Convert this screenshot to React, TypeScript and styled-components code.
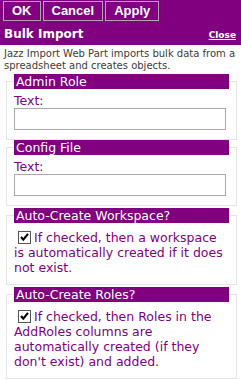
import React from "react";
import styled, { createGlobalStyle } from "styled-components";

const PURPLE = "#800080";

const Global = createGlobalStyle`
  html, body { margin: 0; padding: 0; background: #fff; }
  body { width: 241px; font-family: "DejaVu Sans", Verdana, sans-serif; }
`;

const Panel = styled.div`
  width: 241px;
  display: flex;
  flex-direction: column;
`;

const Top = styled.div`
  background: ${PURPLE};
  display: flex;
  flex-direction: column;
`;

const Toolbar = styled.div`
  display: flex;
  gap: 2px;
  padding: 1px 0 0 3px;
  height: 20px;
`;

const Button = styled.button`
  height: 20px;
  margin: 0;
  padding: 0 8px;
  border: 1px solid #a8a8a8;
  background: ${PURPLE};
  color: #fff;
  font-family: "Liberation Sans", Arial, sans-serif;
  font-weight: bold;
  font-size: 13px;
  line-height: 18px;
  cursor: pointer;
`;

const TitleRow = styled.div`
  height: 24px;
  display: flex;
  align-items: flex-end;
  justify-content: space-between;
  padding: 0 5px 4px 4px;
  box-sizing: border-box;
`;

const Title = styled.span`
  color: #fff;
  font-weight: bold;
  font-size: 12px;
  line-height: 14px;
`;

const Close = styled.a`
  color: #fff;
  font-weight: bold;
  font-size: 9px;
  line-height: 12px;
  text-decoration: underline;
  cursor: pointer;
`;

const Description = styled.div`
  color: #3c3c3c;
  font-size: 10px;
  line-height: 12px;
  padding: 3px 4px 0 4px;
`;

const Group = styled.fieldset<{ $gap: number }>`
  margin: ${(p) => p.$gap}px 0 0 6px;
  width: 231px;
  box-sizing: border-box;
  min-width: 0;
  border: 1px solid #e4e4e4;
  padding: 0 7px 9px 7px;
`;

const Legend = styled.legend`
  display: block;
  width: 100%;
  box-sizing: border-box;
  padding: 0 2px;
  margin: 0;
  height: 15px;
  background: ${PURPLE};
  color: #fff;
  font-size: 12.5px;
  line-height: 15px;
  white-space: nowrap;
`;

const Label = styled.label`
  display: block;
  margin-top: 4px;
  color: ${PURPLE};
  font-size: 12.5px;
  line-height: 15px;
`;

const TextInput = styled.input`
  display: block;
  width: 212px;
  height: 22px;
  margin: 0;
  box-sizing: border-box;
  border: 1px solid #a9a9a9;
  background: #fff;
  padding: 1px 3px;
  font-family: "DejaVu Sans", sans-serif;
  font-size: 12px;
`;

const CheckText = styled.label`
  display: block;
  margin-top: 7px;
  color: ${PURPLE};
  font-size: 12.5px;
  line-height: 15px;
`;

const Box = styled.span`
  display: inline-block;
  width: 13px;
  height: 13px;
  box-sizing: border-box;
  border: 1px solid #555;
  background: #fff;
  margin: 0 3px 0 4px;
  vertical-align: -2px;
  position: relative;
  svg {
    position: absolute;
    left: 0;
    top: 0;
  }
`;

const Check = () => (
  <Box>
    <svg width="11" height="11" viewBox="0 0 11 11">
      <path d="M2 5 L4.3 7.6 L9 1.8" fill="none" stroke="#000" strokeWidth="2.1" />
    </svg>
  </Box>
);

const TextGroup = ({ title, gap }: { title: string; gap: number }) => (
  <Group $gap={gap}>
    <Legend>{title}</Legend>
    <Label>Text:</Label>
    <TextInput type="text" />
  </Group>
);

const CheckGroup = ({ title, text, gap }: { title: string; text: string; gap: number }) => (
  <Group $gap={gap}>
    <Legend>{title}</Legend>
    <CheckText>
      <Check />
      {text}
    </CheckText>
  </Group>
);

export default function App() {
  return (
    <>
      <Global />
      <Panel>
        <Top>
          <Toolbar>
            <Button>OK</Button>
            <Button>Cancel</Button>
            <Button>Apply</Button>
          </Toolbar>
          <TitleRow>
            <Title>Bulk Import</Title>
            <Close>Close</Close>
          </TitleRow>
        </Top>
        <Description>
          Jazz Import Web Part imports bulk data from a spreadsheet and creates objects.
        </Description>
        <TextGroup title="Admin Role" gap={2} />
        <TextGroup title="Config File" gap={0} />
        <CheckGroup
          gap={2}
          title="Auto-Create Workspace?"
          text="If checked, then a workspace is automatically created if it does not exist."
        />
        <CheckGroup
          gap={2}
          title="Auto-Create Roles?"
          text="If checked, then Roles in the AddRoles columns are automatically created (if they don't exist) and added."
        />
      </Panel>
    </>
  );
}
